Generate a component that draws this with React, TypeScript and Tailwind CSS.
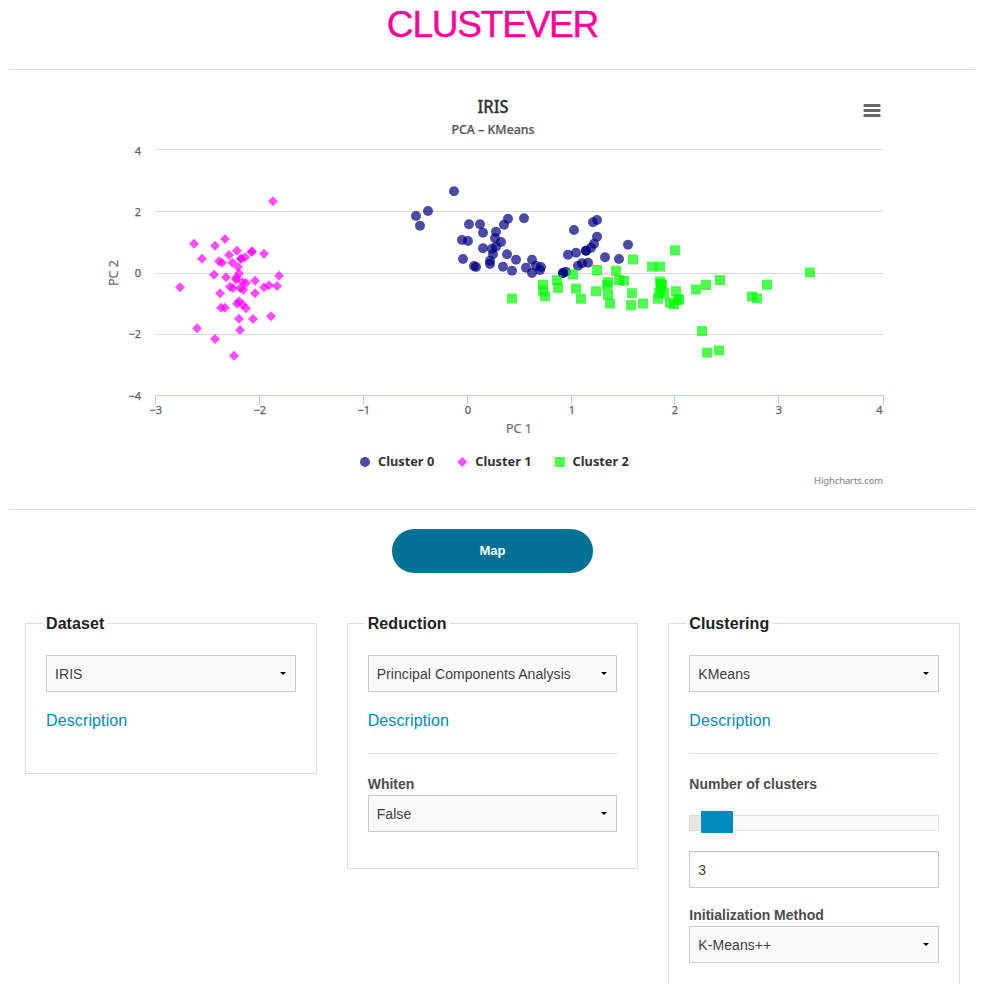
import React from "react";

type Point = [number, number];

const cluster0: Point[] = [
  [454, 191.3], [428, 211], [416, 216], [420, 225.7], [469, 224.3], [480, 224.3], [483, 232.7],
  [462, 240], [468, 241], [463, 259], [474, 266], [476, 267], [483, 248.3], [492, 248.7],
  [493, 254.3], [490, 260.7], [490, 264], [496, 246.7], [501, 242], [495, 238.3], [496, 231.7],
  [504, 224.7], [508, 218.7], [524, 218.3], [507, 254.3], [516, 259.7], [503, 266.7], [512, 270.7],
  [526, 267.7], [532, 259.7], [532, 273], [536, 265.7], [541, 267], [540, 270], [563, 273],
  [563, 273], [566, 271.7], [568, 254.7], [576, 252.7], [578, 265.7], [582, 263.3], [588, 262.7],
  [586, 250.7], [586, 250.7], [591, 247.7], [594, 243.7], [597, 236.7], [597, 220], [593, 222.3],
  [574, 230], [628, 244.7], [605, 257.3], [619, 259],
];

const cluster1: Point[] = [
  [273, 201.3], [194, 243.7], [215, 245.7], [225, 239], [202, 258.7], [229, 255], [237, 250.7],
  [251.5, 252], [252, 251.3], [245, 257.3], [241, 258.7], [241, 258.7], [264, 253.7], [219, 261.3],
  [222, 262.7], [232.3, 262.7], [238, 267], [214, 274.8], [226, 277.3], [239, 273.5], [279, 275.7],
  [180, 287.3], [236, 279.5], [236.3, 277.5], [246, 283], [242.5, 282], [255, 280.7], [220, 293.3],
  [230, 286.7], [233, 288], [240.3, 288.3], [243.3, 289.7], [255, 293.3], [264, 287.3],
  [269, 285.3], [277, 286], [239, 301.3], [237, 303.7], [242.7, 304.7], [246, 308.3],
  [221, 307.7], [225, 307.7], [239, 318.7], [253, 319], [271, 316.3], [197, 328.3], [240, 330],
  [215, 339], [234, 355.7],
];

const cluster2: Point[] = [
  [512, 298.5], [543, 284.8], [543, 290.8], [545, 296.2], [557, 280.2], [558, 287.8], [573, 274.3],
  [576, 288.6], [581, 298.7], [596, 291.2], [597, 270], [608, 282.2], [607, 285.2], [608, 294.8],
  [610, 303.5], [616, 270.8], [619, 280], [624, 280.8], [633, 259.5], [632, 293.2], [631, 305.2],
  [643, 303.5], [675, 250.3], [652, 266.6], [660, 266.6], [660, 281.5], [662, 285], [661, 284],
  [661, 288.5], [659, 292.7], [664, 293.3], [658, 298.7], [676, 291.2], [670, 302.7], [674, 304.3],
  [678, 300], [679, 299.2], [696, 289.4], [706, 285], [720, 280], [702, 331.1], [707, 352.6],
  [719, 350.5], [810, 272.4], [767, 284.7], [752, 296.5], [757, 298.4],
];

const Dot = ({ p }: { p: Point }) => <circle cx={p[0]} cy={p[1]} r={5} fill="#000080" fillOpacity={0.7} />;
const Diamond = ({ p: [x, y] }: { p: Point }) => (
  <path d={`M${x} ${y - 5}L${x + 5} ${y}L${x} ${y + 5}L${x - 5} ${y}Z`} fill="#ff00ff" fillOpacity={0.7} />
);
const Square = ({ p: [x, y] }: { p: Point }) => (
  <rect x={x - 5} y={y - 5} width={10} height={10} fill="#00ff00" fillOpacity={0.7} />
);

// Label, grid line position, text baseline
const yTicks: [string, number, number][] = [
  ["4", 149.5, 155], ["2", 211.5, 216], ["0", 273.5, 277], ["−2", 334.5, 338], ["−4", 395.5, 400],
];
const xTicks: [string, number][] = [
  ["−3", 155.5], ["−2", 259.5], ["−1", 363.5], ["0", 467.5], ["1", 571.5], ["2", 674.5], ["3", 778.5], ["4", 883.5],
];

function Chart() {
  return (
    <svg
      className="block h-[401px] w-[965px] font-['Noto_Sans','Open_Sans',sans-serif]"
      viewBox="10 90 965 401"
    >
      <text x={493} y={113} textAnchor="middle" fontSize={18} fontWeight={500} fill="#333" stroke="#333" strokeWidth={0.3} textLength={31} lengthAdjust="spacingAndGlyphs">IRIS</text>
      <text x={493} y={134} textAnchor="middle" fontSize={12} fontWeight={500} fill="#555" stroke="#555" strokeWidth={0.2} textLength={83} lengthAdjust="spacingAndGlyphs">PCA – KMeans</text>
      <path d="M864.8 105.5H879.2M864.8 110.5H879.2M864.8 115.5H879.2" stroke="#666" strokeWidth={3} strokeLinecap="round" />

      {yTicks.map(([label, y, baseline], i) => (
        <g key={label}>
          {i < 4 && <path d={`M156 ${y}H883`} stroke="#d8d8d8" />}
          <text x={141} y={baseline} textAnchor="end" fontSize={11} fill="#606060" stroke="#606060" strokeWidth={0.25}>{label}</text>
        </g>
      ))}
      <path d="M155 395.5H884" stroke="#c0d0e0" />
      {xTicks.map(([label, x], i) => (
        <g key={label}>
          <path d={`M${x} 395V405`} stroke="#c0d0e0" />
          <text x={i === 7 ? 879.5 : x + 0.3} y={414} textAnchor="middle" fontSize={11} fill="#606060" stroke="#606060" strokeWidth={0.25}>{label}</text>
        </g>
      ))}
      <text x={519} y={433} textAnchor="middle" fontSize={12} fill="#707070" stroke="#707070" strokeWidth={0.2} textLength={26} lengthAdjust="spacingAndGlyphs">PC 1</text>
      <text transform="translate(118 273) rotate(-90)" textAnchor="middle" fontSize={12} fill="#707070" stroke="#707070" strokeWidth={0.2} textLength={26} lengthAdjust="spacingAndGlyphs">PC 2</text>

      {cluster0.map((p, i) => <Dot key={i} p={p} />)}
      {cluster1.map((p, i) => <Diamond key={i} p={p} />)}
      {cluster2.map((p, i) => <Square key={i} p={p} />)}

      <Dot p={[365, 462]} />
      <Diamond p={[462.3, 462]} />
      <Square p={[559.8, 462]} />
      {["Cluster 0", "Cluster 1", "Cluster 2"].map((name, i) => (
        <text key={name} x={378 + i * 97.3} y={466} fontSize={12} fontWeight={700} fill="#333" textLength={56.2} lengthAdjust="spacingAndGlyphs">{name}</text>
      ))}
      <text x={883} y={484} textAnchor="end" fontSize={9} fill="#909090" stroke="#909090" strokeWidth={0.2} textLength={69} lengthAdjust="spacingAndGlyphs">Highcharts.com</text>
    </svg>
  );
}

function Select({ value, className = "" }: { value: string; className?: string }) {
  return (
    <button
      type="button"
      className={`flex h-[37px] w-full items-center justify-between border border-[#ccc] bg-[#fafafa] pr-[9px] pl-2 text-sm tracking-[0.07px] text-[#404040] ${className}`}
    >
      <span>{value}</span>
      <svg className="h-[3px] w-[6px]" viewBox="0 0 6 3"><path d="M0 0H6L3 3Z" fill="#000" /></svg>
    </button>
  );
}

function Panel({ title, className, children }: { title: string; className: string; children: React.ReactNode }) {
  return (
    <div className="flex-1 px-[15px]">
      <fieldset className={`min-w-0 border border-[#ddd] px-5 pt-6 ${className}`}>
        <legend className="-ml-[3px] h-4 bg-white px-[3px] text-base leading-[18px] font-bold tracking-[0.08px] text-[#222]">{title}</legend>
        {children}
      </fieldset>
    </div>
  );
}

const Description = () => (
  <a href="#" className="mt-4 block h-[26px] text-base leading-[26px] tracking-[0.12px] text-[#008cba]">Description</a>
);
const Label = ({ children, className = "" }: { children: React.ReactNode; className?: string }) => (
  <label className={`block h-[21px] text-sm leading-[21px] font-bold text-[#4d4d4d] ${className}`}>{children}</label>
);

export default function App() {
  return (
    <div className="h-[984px] w-[989px] overflow-hidden bg-white pl-[10px] font-['Liberation_Sans',Arial,sans-serif]">
      <div className="w-[965px]">
        <h1 className="h-[69px] pt-[2px] text-center text-[37px] leading-[46px] tracking-[-1.2px] text-[#ff0098] [-webkit-text-stroke:0.4px_#ff0098]">CLUSTEVER</h1>
        <hr className="mb-5 border-t border-[#ddd]" />
        <Chart />
        <hr className="mt-[18px] border-t border-[#ddd]" />
        <div className="flex justify-center pt-[19px]">
          <button type="button" className="h-11 w-[201px] rounded-full bg-[#007095] text-[13px] font-bold text-white">Map</button>
        </div>
        <div className="mt-[42px] flex items-start">
          <Panel title="Dataset" className="h-[159px]">
            <Select value="IRIS" />
            <Description />
          </Panel>
          <Panel title="Reduction" className="h-[254px]">
            <Select value="Principal Components Analysis" />
            <Description />
            <hr className="mt-[19px] mb-5 border-t border-[#ddd]" />
            <Label>Whiten</Label>
            <Select value="False" />
          </Panel>
          <Panel title="Clustering" className="h-[420px]">
            <Select value="KMeans" />
            <Description />
            <hr className="mt-[19px] mb-5 border-t border-[#ddd]" />
            <Label>Number of clusters</Label>
            <div className="mt-5 flex h-4 items-start border border-[#ddd] bg-[#fafafa]">
              <div className="h-[14px] w-[11px] bg-[#e5e5e5]" />
              <div className="-mt-[5px] h-[22px] w-8 shrink-0 bg-[#008cba]" />
            </div>
            <input
              type="text"
              defaultValue="3"
              className="mt-5 block h-[37px] w-full border border-[#ccc] px-2 text-sm text-[#404040] shadow-[inset_0_1px_2px_rgba(0,0,0,0.1)]"
            />
            <Label className="mt-[17px]">Initialization Method</Label>
            <Select value="K-Means++" />
          </Panel>
        </div>
      </div>
    </div>
  );
}
